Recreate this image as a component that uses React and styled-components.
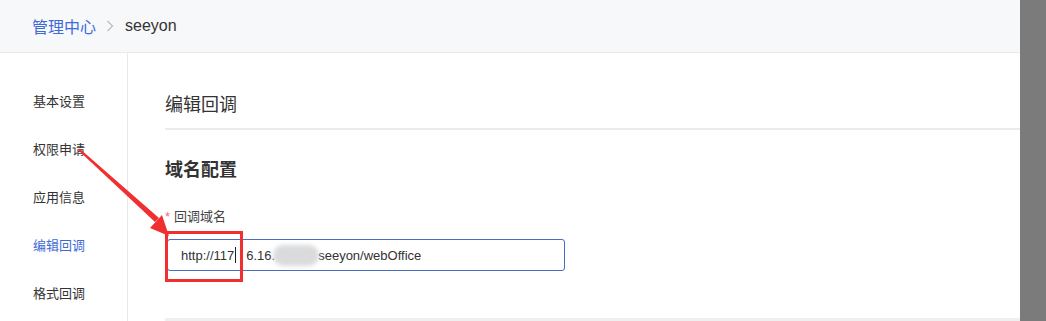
import React from 'react';
import styled, { createGlobalStyle } from 'styled-components';

const Global = createGlobalStyle`
  html, body { margin: 0; padding: 0; background: #fff; }
  body {
    font-family: "Liberation Sans", "Noto Sans CJK SC", sans-serif;
    overflow: hidden;
  }
`;

const Page = styled.div`
  display: flex;
  width: 1046px;
  height: 321px;
  position: relative;
  overflow: hidden;
`;

const Main = styled.div`
  flex: 1;
  display: flex;
  flex-direction: column;
  min-width: 0;
`;

const ScrollTrack = styled.div`
  width: 26px;
  background: #7b7b7b;
`;

const Header = styled.header`
  height: 52px;
  flex-shrink: 0;
  background: #f7f8fa;
  border-bottom: 1px solid #e9eaec;
  display: flex;
  align-items: center;
  padding-left: 32px;
  font-size: 16px;
`;

const Crumb = styled.span`
  color: ${p => (p.link ? '#3f6ad8' : '#333')};
`;

const Sep = styled.span`
  display: flex;
  align-items: center;
  margin: 0 11px 0 10px;
`;

const Body = styled.div`
  flex: 1;
  display: flex;
`;

const Sidebar = styled.nav`
  width: 128px;
  flex-shrink: 0;
  border-right: 1px solid #e9eaec;
  padding-top: 25px;
  box-sizing: border-box;
`;

const NavItem = styled.div`
  height: 48px;
  line-height: 48px;
  padding-left: 33px;
  font-size: 13px;
  color: ${p => (p.active ? '#3f6ad8' : '#333')};
`;

const Content = styled.section`
  flex: 1;
  padding-left: 37px;
  display: flex;
  flex-direction: column;
`;

const PageTitle = styled.div`
  height: 77px;
  box-sizing: border-box;
  padding-top: 42px;
  line-height: 20px;
  font-size: 18px;
  color: #333;
  border-bottom: 2px solid #ebebeb;
`;

const SectionTitle = styled.div`
  margin-top: 30px;
  line-height: 20px;
  font-size: 18px;
  font-weight: bold;
  color: #333;
`;

const Label = styled.div`
  margin-top: 27px;
  line-height: 20px;
  font-size: 13px;
  color: #444;
  display: flex;
  align-items: center;
`;

const Star = styled.span`
  color: #f07070;
  margin-right: 4px;
  font-size: 13px;
`;

const Input = styled.div`
  margin-top: 12px;
  margin-left: 2px;
  width: 398px;
  height: 32px;
  box-sizing: border-box;
  border: 1px solid #4a6cc2;
  border-radius: 3px;
  display: flex;
  align-items: center;
  padding-left: 13px;
  font-size: 13px;
  color: #333;
`;

const Caret = styled.span`
  display: inline-block;
  width: 1px;
  height: 16px;
  background: #222;
  margin: 0 10px 0 1px;
`;

const Blur = styled.span`
  display: inline-block;
  width: 46px;
  height: 21px;
  border-radius: 10px;
  background: #dadbdd;
  filter: blur(2px);
  margin: 0 -1px 0 -2px;
`;

const Footer = styled.div`
  margin-top: auto;
  border-bottom: 3px solid #efefef;
`;

const Overlay = styled.svg`
  position: absolute;
  left: 0;
  top: 0;
  pointer-events: none;
`;

const Chevron = () => (
  <svg width="8" height="12" viewBox="0 0 8 12">
    <path d="M1.5 1 L6.5 6 L1.5 11" fill="none" stroke="#b8bcc4" strokeWidth="1.2" />
  </svg>
);

const navItems = ['基本设置', '权限申请', '应用信息', '编辑回调', '格式回调'];

export default function App() {
  return (
    <Page>
      <Global />
      <Main>
        <Header>
          <Crumb link>管理中心</Crumb>
          <Sep><Chevron /></Sep>
          <Crumb>seeyon</Crumb>
        </Header>
        <Body>
          <Sidebar>
            {navItems.map(t => (
              <NavItem key={t} active={t === '编辑回调'}>{t}</NavItem>
            ))}
          </Sidebar>
          <Content>
            <PageTitle>编辑回调</PageTitle>
            <SectionTitle>域名配置</SectionTitle>
            <Label><Star>*</Star>回调域名</Label>
            <Input>
              http://117<Caret />6.16.<Blur />seeyon/webOffice
            </Input>
            <Footer />
          </Content>
        </Body>
      </Main>
      <ScrollTrack />
      <Overlay width="1046" height="321" viewBox="0 0 1046 321">
        <polygon points="78,150 79.5,148.5 159,218 155,222" fill="#f03030" />
        <polygon points="169,236 150,228 162,215" fill="#f03030" />
        <rect x="166.5" y="232.5" width="75" height="48" fill="none" stroke="#f03030" strokeWidth="3" />
      </Overlay>
    </Page>
  );
}
